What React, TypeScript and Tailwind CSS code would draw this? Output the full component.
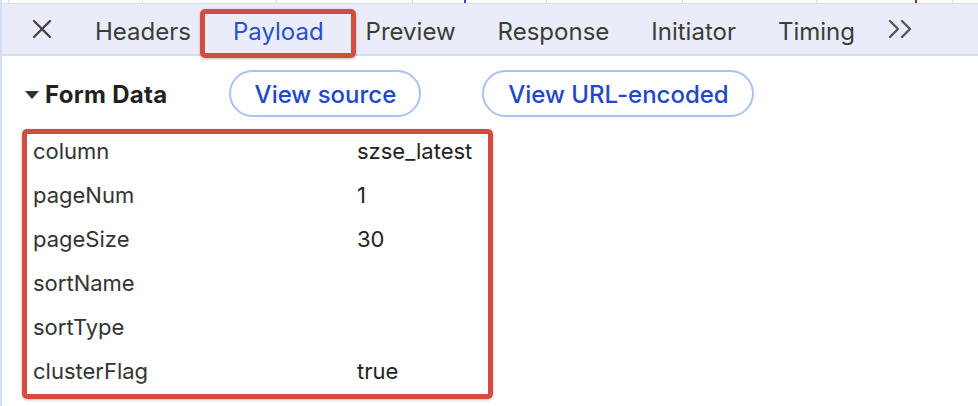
import React from "react";

const font = { fontFamily: "Inter, 'Noto Sans', 'Liberation Sans', sans-serif" };

const rows: [string, string][] = [
  ["column", "szse_latest"],
  ["pageNum", "1"],
  ["pageSize", "30"],
  ["sortName", ""],
  ["sortType", ""],
  ["clusterFlag", "true"],
];

const cells = [7, 134, 134, 136, 134, 136, 134, 136];

export default function App() {
  return (
    <div
      className="w-[978px] h-[406px] bg-white overflow-hidden border-l-2 border-[#d3def7] flex flex-col"
      style={font}
    >
      {/* top strip of table header */}
      <div className="relative h-[4px] flex border-b border-[#d3def7] shrink-0">
        {cells.map((w, i) => (
          <div key={i} className="h-full border-r border-[#d3def7]" style={{ width: w }} />
        ))}
        <div className="absolute left-[462px] top-0 w-[2px] h-[3px] bg-[#2a4fc8]" />
        <div className="absolute left-[913px] top-0 w-[2px] h-[3px] bg-[#b3261e]" />
      </div>

      {/* tab bar */}
      <div className="h-[52px] shrink-0 bg-[#eaedf9] border-b-2 border-[#d3def7] flex items-center pl-[30px] pt-[6px] gap-[42px] text-[24px] text-[#3b3b3b]">
        <svg width="20" height="20" viewBox="0 0 20 20" className="shrink-0 -mt-[6px]">
          <path d="M2 2 L18 18 M18 2 L2 18" stroke="#444" strokeWidth="2.4" strokeLinecap="round" />
        </svg>
        <span className="leading-none ml-[1px]">Headers</span>
        <span className="relative leading-none text-[#2a4fc8]">
          Payload
          <span className="absolute -left-[33px] -right-[32px] -top-[11px] -bottom-[14px] border-[5px] border-[#d24c3f] rounded-[5px] shadow-[0_1px_3px_rgba(0,0,0,0.25)]" />
        </span>
        <span className="leading-none">Preview</span>
        <span className="leading-none">Response</span>
        <span className="leading-none">Initiator</span>
        <span className="leading-none">Timing</span>
        <svg width="26" height="20" viewBox="0 0 26 20" className="-ml-[9px] shrink-0 -mt-[6px]">
          <path d="M2 2 L10 10 L2 18 M14 2 L22 10 L14 18" stroke="#555" strokeWidth="2.4" fill="none" strokeLinecap="round" strokeLinejoin="round" />
        </svg>
      </div>

      {/* form data header */}
      <div className="mt-[14px] h-[47px] flex items-center pl-[23px] shrink-0">
        <div className="flex items-center gap-[6px] pt-[3px]">
          <svg width="14" height="8" viewBox="0 0 14 8">
            <path d="M0 0 H14 L7 8 Z" fill="#333" />
          </svg>
          <span className="text-[24px] font-bold text-[#222] tracking-[0.3px]">Form Data</span>
        </div>
        <button className="ml-[62px] w-[192px] h-[47px] pt-[3px] rounded-full border-2 border-[#a9c2f4] text-[24px] font-medium text-[#2048c9] flex items-center justify-center">
          View source
        </button>
        <button className="ml-[61px] w-[272px] h-[47px] pt-[3px] rounded-full border-2 border-[#a9c2f4] text-[24px] font-medium text-[#2048c9] flex items-center justify-center">
          View URL-encoded
        </button>
      </div>

      {/* table */}
      <div className="mt-[12px] ml-[20px] w-[471px] h-[270px] border-[5px] border-[#d24c3f] rounded-[5px] shadow-[0_1px_3px_rgba(0,0,0,0.25)] overflow-hidden shrink-0">
        {rows.map(([k, v]) => (
          <div key={k} className="h-[44px] flex items-start pt-[5px] pl-[6px] text-[22px] leading-[24px]">
            <span className="w-[324px] text-[#333]">{k}</span>
            <span className="text-[#222]">{v}</span>
          </div>
        ))}
      </div>
    </div>
  );
}
